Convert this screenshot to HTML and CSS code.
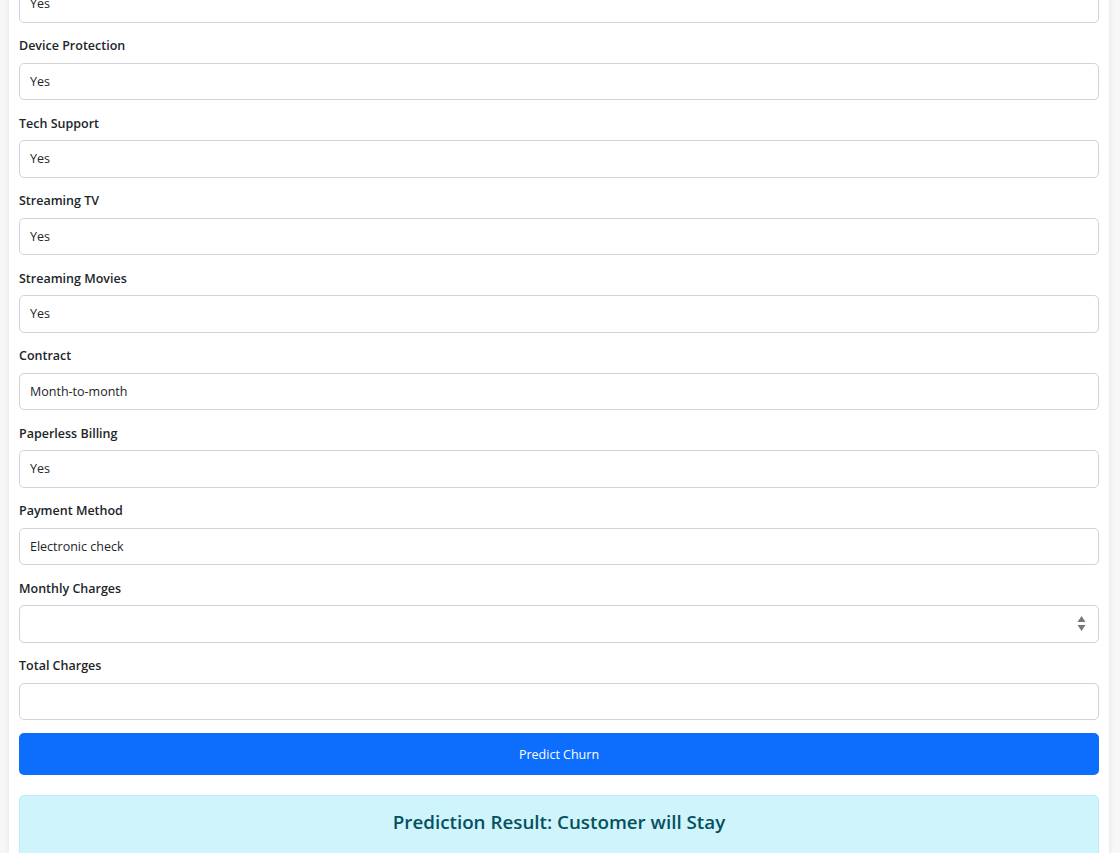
FILE: index.html
```html
<!DOCTYPE html>
<html lang="en">
<head>
<meta charset="utf-8">
<title>Customer Churn Prediction</title>
<link rel="stylesheet" href="styles.css">
</head>
<body>
<div class="page">
  <div class="card">
    <form class="form">
      <div class="group">
        <label class="label">Online Backup</label>
        <div class="control">Yes</div>
      </div>
      <div class="group">
        <label class="label">Device Protection</label>
        <div class="control">Yes</div>
      </div>
      <div class="group">
        <label class="label">Tech Support</label>
        <div class="control">Yes</div>
      </div>
      <div class="group">
        <label class="label">Streaming TV</label>
        <div class="control">Yes</div>
      </div>
      <div class="group">
        <label class="label">Streaming Movies</label>
        <div class="control">Yes</div>
      </div>
      <div class="group">
        <label class="label">Contract</label>
        <div class="control">Month-to-month</div>
      </div>
      <div class="group">
        <label class="label">Paperless Billing</label>
        <div class="control">Yes</div>
      </div>
      <div class="group">
        <label class="label">Payment Method</label>
        <div class="control">Electronic check</div>
      </div>
      <div class="group">
        <label class="label">Monthly Charges</label>
        <div class="control number">
          <svg class="spin" width="9" height="17" viewBox="0 0 9 17"><path d="M4.5 1 L8.5 7 L0.5 7 Z" fill="#777"/><path d="M0.5 10 L8.5 10 L4.5 16 Z" fill="#777"/></svg>
        </div>
      </div>
      <div class="group last">
        <label class="label">Total Charges</label>
        <div class="control"></div>
      </div>
      <button type="button" class="btn">Predict Churn</button>
      <div class="alert">Prediction Result: Customer will Stay</div>
    </form>
  </div>
</div>
</body>
</html>
```
FILE: styles.css
```css
html, body {
  margin: 0;
  padding: 0;
  background: #f7f7f7;
  font-family: "Open Sans", "Noto Sans", "Liberation Sans", sans-serif;
  color: #212529;
  overflow: hidden;
  height: 853px;
}
.page {
  padding: 0 11px 0 9px;
}
.card {
  background: #fff;
  box-shadow: 0 0 6px rgba(0,0,0,0.08);
  padding: 0 10px 30px;
}
.form {
  margin-top: -41.5px;
  display: flex;
  flex-direction: column;
}
.group {
  display: flex;
  flex-direction: column;
  margin-bottom: 13.5px;
}
.group.last {
  margin-bottom: 13px;
}
.label {
  font-size: 12.5px;
  font-weight: 600;
  line-height: 19.5px;
  margin-bottom: 7px;
  color: #212529;
}
.control {
  box-sizing: border-box;
  height: 37.5px;
  border: 1px solid #ced4da;
  border-radius: 5px;
  padding: 0 10px;
  display: flex;
  align-items: center;
  font-size: 12.5px;
  color: #212529;
  position: relative;
  background: #fff;
}
.number .spin {
  position: absolute;
  right: 12px;
  top: 9px;
}
.btn {
  height: 42px;
  border: none;
  border-radius: 5px;
  background: #0d6efd;
  color: #fff;
  font-family: inherit;
  font-size: 12.5px;
  cursor: pointer;
}
.alert {
  margin-top: 20px;
  box-sizing: border-box;
  height: 72px;
  padding-top: 13px;
  background: #cff4fc;
  border: 1px solid #b6effb;
  border-radius: 5px;
  color: #055160;
  text-align: center;
  font-size: 18.8px;
  font-weight: 600;
  line-height: 26px;
}
```
